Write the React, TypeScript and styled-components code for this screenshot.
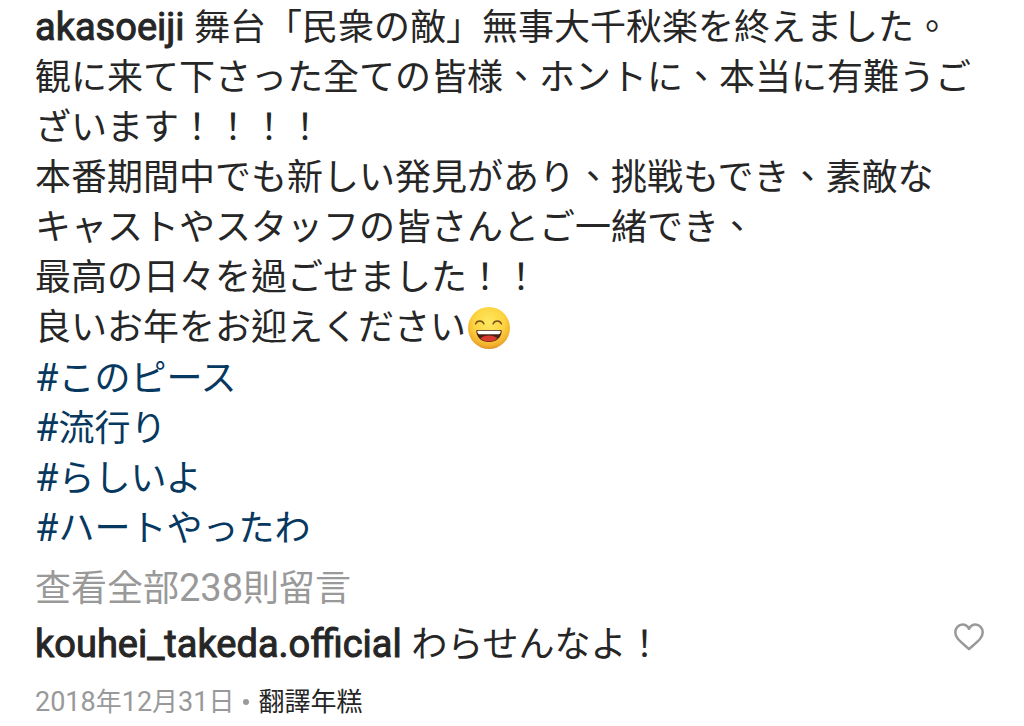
import React from "react";
import styled, { createGlobalStyle } from "styled-components";

const Global = createGlobalStyle`
  body { margin: 0; background: #fff; }
`;

const Post = styled.main`
  box-sizing: border-box;
  padding: 3px 36px 0 35px;
  color: #262626;
  font-family: Roboto, "Noto Sans CJK TC", sans-serif;
  font-size: 36px;
  line-height: 50px;
`;

const Caption = styled.p`
  margin: 0;
`;

const Line = styled.span`
  display: block;
`;

const Latin = styled.span<{ $size?: number }>`
  font-size: ${(p) => p.$size ?? 38}px;
  line-height: 1;
`;

const UserLink = styled.a`
  color: inherit;
  font-size: 38px;
  font-weight: 400;
  line-height: 1;
  text-decoration: none;
  -webkit-text-stroke: 1px currentColor;
`;

const Emoji = styled.svg`
  width: 44px;
  height: 44px;
  vertical-align: middle;
  margin: -4px 0 0;
`;

const Tags = styled.nav`
  display: flex;
  flex-direction: column;
  align-items: flex-start;
  padding-top: 1px;
`;

const Tag = styled.a`
  color: #07385f;
  text-decoration: none;
`;

const TextButton = styled.button<{ $tone: string }>`
  display: block;
  padding: 0;
  border: 0;
  background: none;
  color: ${(p) => p.$tone};
  font: inherit;
  cursor: pointer;
`;

const ViewAll = styled(TextButton)`
  margin-top: 10px;
`;

const Comment = styled.div`
  display: flex;
  align-items: center;
  justify-content: space-between;
  margin-top: 6px;
`;

const LikeButton = styled.button`
  display: flex;
  margin: 0 4px 16px 0;
  padding: 0;
  border: 0;
  background: none;
  cursor: pointer;
`;

const Meta = styled.footer`
  display: flex;
  align-items: center;
  gap: 9px;
  margin-top: 12px;
  color: #999;
  font-size: 26px;
  line-height: 40px;
`;

const Dot = styled.span`
  width: 6px;
  height: 6px;
  border-radius: 50%;
  background: #999;
`;

const tags = ["このピース", "流行り", "らしいよ", "ハートやったわ"];

function GrinningFace() {
  return (
    <Emoji viewBox="0 0 44 44" role="img" aria-label="😄">
      <defs>
        <radialGradient id="face" cx="50%" cy="36%" r="66%">
          <stop offset="0" stopColor="#ffe862" />
          <stop offset="0.55" stopColor="#fdd440" />
          <stop offset="0.85" stopColor="#f2b02c" />
          <stop offset="1" stopColor="#d98a26" />
        </radialGradient>
      </defs>
      <circle cx="23" cy="22" r="21" fill="url(#face)" />
      <path d="M9.500 18c1.500-4 7-4 8.500 0M27 18c1.500-4 7-4 8.500 0" fill="none" stroke="#76501b" strokeWidth="1.300" strokeLinecap="round" />
      <path d="M11.500 24h23c1 0 1.300.7 1.200 1.500C35 32 30 36 23 36S11 32 10.300 25.500c-.1-.8.200-1.500 1.200-1.500z" fill="#4b2015" />
      <path d="M12 24.700h22c.8 0 .9.800.6 1.500-.4 1.400-1.300 2-2.500 2H13.900c-1.200 0-2.100-.6-2.500-2-.3-.7-.2-1.500.6-1.500z" fill="#fff" />
      <path d="M14.500 32.500c2.200-2.200 5.200-3 8.500-3s6.300.8 8.500 3c-2.200 2-5 2.900-8.500 2.900s-6.300-.9-8.500-2.900z" fill="#d93a2f" />
    </Emoji>
  );
}

function Heart() {
  return (
    <svg width="30" height="28" viewBox="0 0 30 28" aria-hidden="true">
      <path
        d="M15 26.200C13.500 24.600 7 19.500 4 16 1.800 13.500 1.300 11.300 1.300 9.200 1.300 4.900 4.500 1.600 8.500 1.600c2.800 0 5.100 1.500 6.500 4.200 1.400-2.700 3.700-4.200 6.500-4.200 4 0 7.200 3.300 7.200 7.600 0 2.100-.5 4.300-2.700 6.800-3 3.500-9.500 8.600-11 10.200z"
        fill="none"
        stroke="#999"
        strokeWidth="2.500"
        strokeLinejoin="round"
      />
    </svg>
  );
}

export default function App() {
  return (
    <>
      <Global />
      <Post lang="ja">
        <Caption lang="zh-Hant">
          <Line>
            <UserLink href="#akasoeiji">akasoeiji</UserLink>
            <Latin> </Latin>舞台「民衆の敵」無事大千秋楽を終えました。
          </Line>
          <Line>観に来て下さった全ての皆様、ホントに、本当に有難うございます！！！！</Line>
          <Line>本番期間中でも新しい発見があり、挑戦もでき、素敵な</Line>
          <Line>キャストやスタッフの皆さんとご一緒でき、</Line>
          <Line>最高の日々を過ごせました！！</Line>
          <Line>良いお年をお迎えください<GrinningFace /></Line>
        </Caption>
        <Tags aria-label="Hashtags">
          {tags.map((tag) => (
            <Tag key={tag} href={`#${tag}`}>
              <Latin>#</Latin>{tag}
            </Tag>
          ))}
        </Tags>
        <ViewAll type="button" $tone="#999">
          查看全部<Latin>238</Latin>則留言
        </ViewAll>
        <Comment lang="zh-Hant">
          <span>
            <UserLink href="#kouhei_takeda.official">kouhei_takeda.official</UserLink>
            <Latin> </Latin>わらせんなよ！
          </span>
          <LikeButton type="button" aria-label="Like">
            <Heart />
          </LikeButton>
        </Comment>
        <Meta>
          <time dateTime="2018-12-31">
            <Latin $size={27}>2018</Latin>年<Latin $size={27}>12</Latin>月<Latin $size={27}>31</Latin>日
          </time>
          <Dot />
          <TextButton type="button" $tone="#262626">翻譯年糕</TextButton>
        </Meta>
      </Post>
    </>
  );
}
